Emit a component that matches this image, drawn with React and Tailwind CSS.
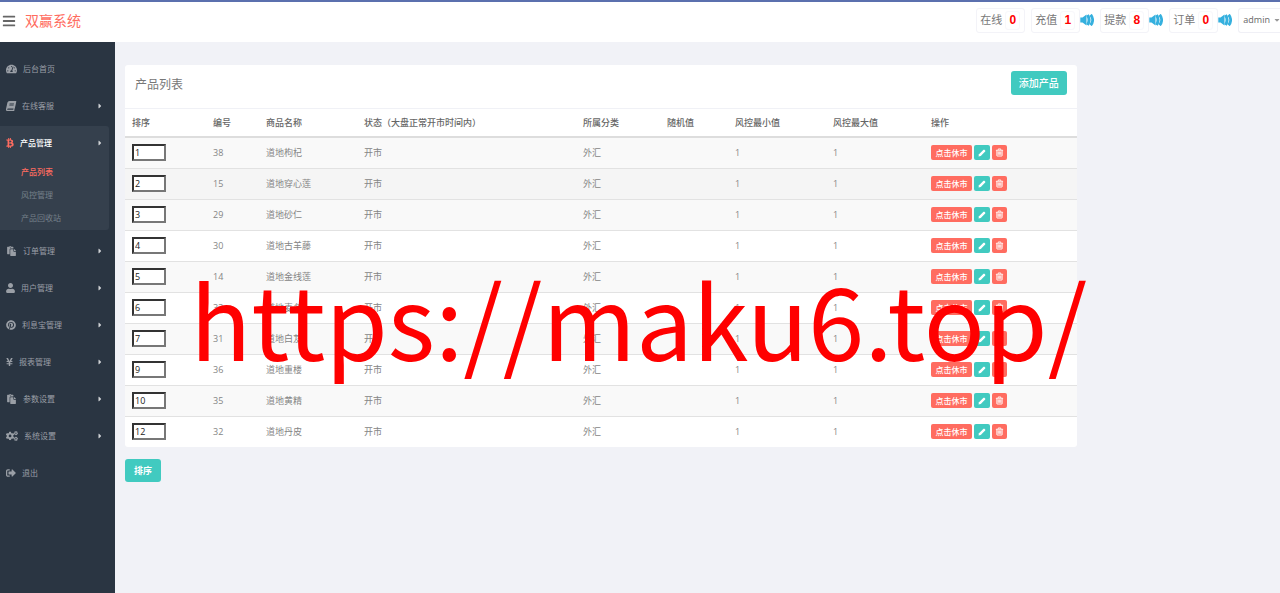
import React, { useState } from 'react';
import {
  FaBars,
  FaBook,
  FaBtc,
  FaCaretDown,
  FaCaretRight,
  FaCogs,
  FaPaste,
  FaPinterest,
  FaSignOutAlt,
  FaTachometerAlt,
  FaUser,
  FaYenSign
} from 'react-icons/fa';

const MENU = [
  { label: '后台首页', icon: FaTachometerAlt, iconClass: 'w-[11px] mr-[6px]' },
  { label: '在线客服', icon: FaBook, iconClass: 'w-[10px] mr-[6px] -skew-x-12', arrow: true },
  {
    label: '产品管理',
    icon: FaBtc,
    iconClass: 'w-[8px] mr-[6px] text-[#ff6c60]',
    arrow: true,
    children: ['产品列表', '风控管理', '产品回收站']
  },
  { label: '订单管理', icon: FaPaste, iconClass: 'w-[11px] mr-[6px]', arrow: true },
  { label: '用户管理', icon: FaUser, iconClass: 'w-[9px] mr-[6px]', arrow: true },
  { label: '利息宝管理', icon: FaPinterest, iconClass: 'w-[10px] mr-[6px]', arrow: true },
  { label: '报表管理', icon: FaYenSign, iconClass: 'w-[7px] mr-[6px]', arrow: true },
  { label: '参数设置', icon: FaPaste, iconClass: 'w-[11px] mr-[6px]', arrow: true },
  { label: '系统设置', icon: FaCogs, iconClass: 'w-[12px] mr-[6px]', arrow: true },
  { label: '退出', icon: FaSignOutAlt, iconClass: 'w-[10px] mr-[6px]' }
];

const COUNTERS = [
  { label: '在线', count: 0 },
  { label: '充值', count: 1, sound: true },
  { label: '提款', count: 8, sound: true },
  { label: '订单', count: 0, sound: true }
];

const COLUMNS = [
  { title: '排序', width: 'w-[81px]' },
  { title: '编号', width: 'w-[53px]' },
  { title: '商品名称', width: 'w-[98px]' },
  { title: '状态（大盘正常开市时间内）', width: 'w-[219px]' },
  { title: '所属分类', width: 'w-[84px]' },
  { title: '随机值', width: 'w-[68px]' },
  { title: '风控最小值', width: 'w-[98px]' },
  { title: '风控最大值', width: 'w-[98px]' },
  { title: '操作', width: '' }
];

const PRODUCTS = [
  { sort: 1, id: 38, name: '道地枸杞' },
  { sort: 2, id: 15, name: '道地穿心莲' },
  { sort: 3, id: 29, name: '道地砂仁' },
  { sort: 4, id: 30, name: '道地古羊藤' },
  { sort: 5, id: 14, name: '道地金线莲' },
  { sort: 6, id: 33, name: '道地麦冬' },
  { sort: 7, id: 31, name: '道地白芨' },
  { sort: 9, id: 36, name: '道地重楼' },
  { sort: 10, id: 35, name: '道地黄精' },
  { sort: 12, id: 32, name: '道地丹皮' }
];

function SpeakerIcon() {
  return (
    <svg className="w-[14px] h-[12px]" viewBox="0 0 14 12" fill="none" stroke="#35b0de">
      <path d="M0.3 3.6H2.5L6.5 0.5V11.5L2.5 8.4H0.3Z" fill="#35b0de" stroke="none" />
      <path d="M7.5 1C9.4 4 9.4 8 7.5 11" strokeWidth="3" />
      <path d="M10.6 0.8C13.2 3.8 13.2 8.2 10.6 11.2" strokeWidth="3" />
    </svg>
  );
}

function PencilIcon() {
  return (
    <svg className="size-[8px]" viewBox="0 0 16 16" fill="currentColor">
      <path d="M1 15L2 10.5L11 1.7Q12 0.8 13 1.7L14.3 3Q15.2 4 14.3 5L5.5 14Z" />
    </svg>
  );
}

function TrashIcon() {
  return (
    <svg className="size-[9px]" viewBox="0 0 1792 1792" fill="currentColor" stroke="currentColor" strokeWidth="60">
      <path d="M704 736v576q0 14-9 23t-23 9h-64q-14 0-23-9t-9-23v-576q0-14 9-23t23-9h64q14 0 23 9t9 23zm256 0v576q0 14-9 23t-23 9h-64q-14 0-23-9t-9-23v-576q0-14 9-23t23-9h64q14 0 23 9t9 23zm256 0v576q0 14-9 23t-23 9h-64q-14 0-23-9t-9-23v-576q0-14 9-23t23-9h64q14 0 23 9t9 23zm128 724v-948h-896v948q0 22 7 40.5t14.5 27 10.5 8.5h832q3 0 10.5-8.5t14.5-27 7-40.5zm-672-1076h448l-48-117q-7-9-17-11h-317q-10 2-17 11zm928 32v64q0 14-9 23t-23 9h-96v948q0 83-47 143.5t-113 60.5h-832q-66 0-113-58.5t-47-141.5v-952h-96q-14 0-23-9t-9-23v-64q0-14 9-23t23-9h309l70-167q15-37 54-63t79-26h320q40 0 79 26t54 63l70 167h309q14 0 23 9t9 23z" />
    </svg>
  );
}

function Counter({ label, count, sound }) {
  return (
    <div className="flex items-center">
      <a href="#" className="flex h-[25px] items-center rounded-[3px] border border-[#f3f3f8] pl-[3px] pr-1 text-[11px] text-[#777]">
        {label}
        <span className="ml-[3px] flex h-[19px] w-[15px] items-center justify-center rounded-[3px] border border-[#f8f8fb] font-['Liberation_Sans',sans-serif] text-[12px] font-bold text-[#f00]">
          {count}
        </span>
      </a>
      {sound && <SpeakerIcon />}
    </div>
  );
}

function Header() {
  return (
    <header className="flex h-[42px] items-center justify-between border-t-2 border-[#5b70ae] bg-white pb-1">
      <div className="flex items-center pl-[2px] pt-[2px]">
        <button type="button" aria-label="切换菜单" className="text-[14px] text-[#666]">
          <FaBars />
        </button>
        <a href="#" className="ml-[9px] text-[14px] leading-5 text-[#ff6c60]">双赢系统</a>
      </div>
      <div className="flex items-center gap-[6px]">
        {COUNTERS.map((item) => (
          <Counter key={item.label} {...item} />
        ))}
        <button type="button" className="flex h-[25px] items-center gap-[3px] rounded-l-[3px] border border-r-0 border-[#f0f0f6] pl-1 text-[9px] text-[#666]">
          admin
          <FaCaretDown className="-mr-px text-[8px] text-[#999]" />
        </button>
      </div>
    </header>
  );
}

function MenuItem({ item }) {
  const Icon = item.icon;
  const open = Boolean(item.children);

  return (
    <li className={open ? 'mt-[2px] mr-[6px] mb-[2px] rounded-r-[3px] bg-[#35404d] pb-px' : 'mr-[6px]'}>
      <a
        href="#"
        className={`flex items-center pl-[6px] pr-[5px] ${open ? 'h-[34px] font-medium text-white' : 'h-[37px] text-[#9a9fa6]'}`}
      >
        <Icon className={`h-[10px] shrink-0 ${item.iconClass}`} />
        <span className="flex-1">{item.label}</span>
        {item.arrow && <FaCaretRight className="text-[8px] text-[#d0d3d6]" />}
      </a>
      {open && (
        <ul>
          {item.children.map((child, i) => (
            <li key={child}>
              <a
                href="#"
                className={`flex h-[23px] items-center pl-[21px] ${i === 0 ? 'font-medium text-[#ff6c60]' : 'text-[#76808b]'}`}
              >
                {child}
              </a>
            </li>
          ))}
        </ul>
      )}
    </li>
  );
}

function ProductRow({ product }) {
  const [sort, setSort] = useState(product.sort);

  return (
    <tr className="h-[31px] border-b border-[#e2e2e2] odd:bg-[#f9f9f9] nth-2:bg-[#f5f5f5] last:border-b-0">
      <td className="pl-[7px]">
        <input
          type="text"
          aria-label={`${product.name}排序`}
          value={sort}
          onChange={(e) => setSort(e.target.value)}
          className="block h-[17px] w-[34px] border-2 border-t-[#333] border-r-[#777] border-b-[#777] border-l-[#333] bg-white px-px text-[9px] text-[#222]"
        />
      </td>
      <td className="pl-[7px]">{product.id}</td>
      <td className="pl-[7px]">{product.name}</td>
      <td className="pl-[7px]">开市</td>
      <td className="pl-[7px]">外汇</td>
      <td className="pl-[7px]"></td>
      <td className="pl-[7px]">1</td>
      <td className="pl-[7px]">1</td>
      <td className="pl-[7px]">
        <div className="flex items-center gap-[2px] text-[8px] text-white">
          <button type="button" className="h-[15px] w-[41px] rounded-[2px] bg-[#ff6c60] font-medium">点击休市</button>
          <button type="button" aria-label="编辑" className="flex h-[15px] w-[16px] items-center justify-center rounded-[2px] bg-[#41cac0]">
            <PencilIcon />
          </button>
          <button type="button" aria-label="删除" className="flex h-[15px] w-[15px] items-center justify-center rounded-[2px] bg-[#ff6c60]">
            <TrashIcon />
          </button>
        </div>
      </td>
    </tr>
  );
}

export default function App() {
  return (
    <div className="relative flex min-h-screen flex-col overflow-hidden bg-[#f1f2f7] font-['Open_Sans','Noto_Sans_CJK_SC',sans-serif]">
      <Header />
      <div className="flex flex-1">
        <aside className="w-[115px] shrink-0 bg-[#2a3542] pt-[8px] text-[8px]">
          <ul>
            {MENU.map((item) => (
              <MenuItem key={item.label} item={item} />
            ))}
          </ul>
        </aside>

        <main className="flex-1 pt-[23px]">
          <div className="w-10/12 pl-[10px] pr-[9px]">
            <section className="overflow-hidden rounded-[3px] bg-white">
              <div className="flex h-[44px] items-start justify-between border-b border-[#f0f1f6] px-[10px] pt-[6px]">
                <h1 className="text-[12px] leading-7 text-[#777]">产品列表</h1>
                <button type="button" className="h-[24px] rounded-[3px] bg-[#41cac0] px-2 text-[10px] font-medium text-white">添加产品</button>
              </div>
              <table className="w-full table-fixed border-collapse text-left text-[9px] text-[#858585]">
                <thead>
                  <tr className="h-[28px] border-b-2 border-[#ddd] text-[#666]">
                    {COLUMNS.map((col) => (
                      <th key={col.title} className={`pl-[7px] font-medium whitespace-nowrap ${col.width}`}>{col.title}</th>
                    ))}
                  </tr>
                </thead>
                <tbody>
                  {PRODUCTS.map((product) => (
                    <ProductRow key={product.id} product={product} />
                  ))}
                </tbody>
              </table>
            </section>
            <button type="button" className="mt-[12px] h-[23px] rounded-[3px] bg-[#41cac0] px-[9px] text-[9px] font-bold text-white">排序</button>
          </div>
        </main>
      </div>

      {/* site address stamped over the page */}
      <div className="pointer-events-none absolute left-[190px] top-[237px] whitespace-nowrap font-['Noto_Sans_CJK_SC',sans-serif] text-[101px] leading-[160px] text-[#f00]">
        https://maku6.top/
      </div>
    </div>
  );
}
